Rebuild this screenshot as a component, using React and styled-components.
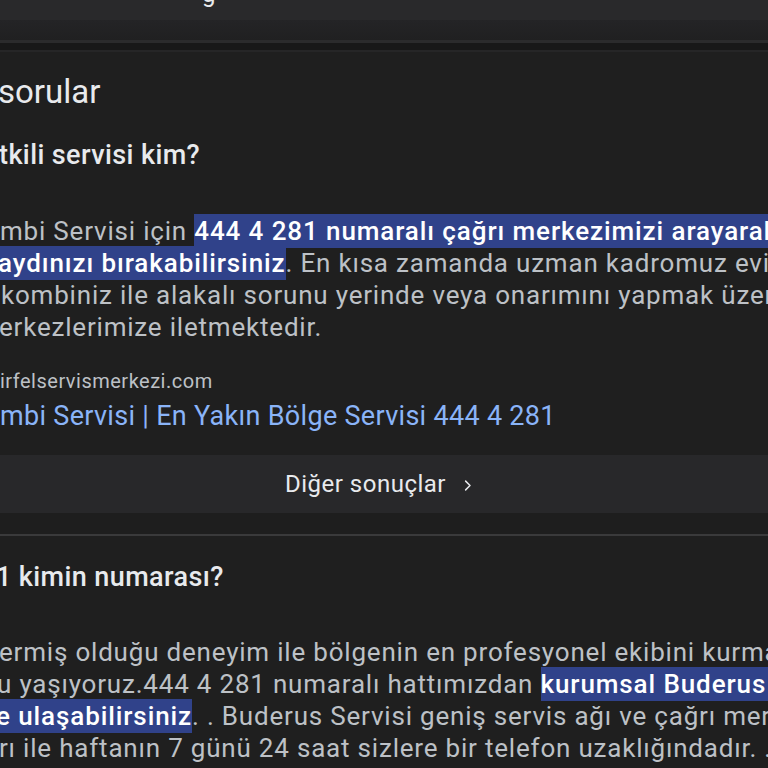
import React from "react";
import styled, { createGlobalStyle } from "styled-components";

const Global = createGlobalStyle`
  html, body { margin: 0; padding: 0; background: #1f1f1f; }
  body { width: 768px; height: 768px; overflow: hidden; font-family: Roboto, "Noto Sans", Arial, sans-serif; }
  #root { width: 768px; overflow: hidden; }
`;

const Page = styled.div`
  width: 768px;
  height: 768px;
  overflow: hidden;
  background: #1f1f1f;
  display: flex;
  flex-direction: column;
`;

const TopBar = styled.div`
  height: 20px;
  background: #29292b;
  overflow: hidden;
  display: flex;
  justify-content: flex-start;
  padding-left: 202px;
`;

const CutGlyph = styled.span`
  color: #e8eaed;
  font-size: 24px;
  line-height: 20px;
  margin-top: -16px;
`;

const SubBar = styled.div`
  height: 20px;
  background: linear-gradient(#242426, #202021);
`;

const Rule = styled.div`
  height: ${(p) => p.h}px;
  background: ${(p) => p.c};
`;

const Section = styled.section`
  display: flex;
  flex-direction: column;
  padding-top: ${(p) => p.pt}px;
`;

const Heading = styled.h2`
  margin: 0;
  font-family: Roboto, sans-serif;
  font-weight: 400;
  font-size: 33px;
  line-height: 40px;
  color: #e8eaed;
  white-space: nowrap;
  margin-left: ${(p) => p.indent || 0}px;
`;

const Question = styled.div`
  font-size: 27px;
  font-weight: 500;
  letter-spacing: 0.4px;
  line-height: 32px;
  color: #e8eaed;
  white-space: nowrap;
  margin-top: ${(p) => p.mt || 0}px;
  margin-left: ${(p) => p.indent || 0}px;
`;

const Para = styled.div`
  display: flex;
  flex-direction: column;
  margin-top: ${(p) => p.mt}px;
`;

const Line = styled.div`
  font-size: 26px;
  letter-spacing: 0.8px;
  line-height: 32px;
  color: #bdc1c6;
  white-space: nowrap;
  margin-left: ${(p) => p.indent || 0}px;
`;

const Mark = styled.span`
  background: #30428a;
  color: #ffffff;
  font-weight: 500;
  letter-spacing: 0.9px;
  padding: 2px 0;
`;

const Source = styled.div`
  margin-top: 26px;
  font-size: 20px;
  letter-spacing: 0.5px;
  line-height: 24px;
  color: #bdc1c6;
  white-space: nowrap;
`;

const TitleLink = styled.a`
  display: block;
  margin-top: 7px;
  font-size: 27px;
  letter-spacing: 0.3px;
  line-height: 32px;
  color: #8ab4f8;
  text-decoration: none;
  white-space: nowrap;
`;

const MoreButton = styled.div`
  margin-top: 23px;
  height: 58px;
  background: #28282a;
  display: flex;
  align-items: center;
  justify-content: center;
  gap: 14px;
  color: #e8eaed;
  font-size: 24px;
  letter-spacing: 0.5px;
  padding-right: 8px;
`;

const Chevron = styled.svg`
  width: 15px;
  height: 15px;
  margin-top: 2px;
`;

const Gap = styled.div`
  height: 21px;
  background: #1e1e1e;
`;

export default function App() {
  return (
    <Page>
      <Global />
      <TopBar>
        <CutGlyph>g</CutGlyph>
      </TopBar>
      <SubBar />
      <Rule h={3} c="#2b2b2c" />
      <Rule h={7} c="#181818" />
      <Rule h={2} c="#262627" />
      <Section pt={20}>
        <Heading indent={-2}>sorular</Heading>
        <Question mt={27} indent={-1}>tkili servisi kim?</Question>
        <Para mt={44}>
          <Line>
            mbi Servisi için <Mark>444 4 281 numaralı çağrı merkezimizi arayarak</Mark>
          </Line>
          <Line indent={-2}>
            <Mark>aydınızı bırakabilirsiniz</Mark>. En kısa zamanda uzman kadromuz evinize
          </Line>
          <Line indent={1}>kombiniz ile alakalı sorunu yerinde veya onarımını yapmak üzere</Line>
          <Line indent={-1}>erkezlerimize iletmektedir.</Line>
        </Para>
        <Source>irfelservismerkezi.com</Source>
        <TitleLink>mbi Servisi | En Yakın Bölge Servisi 444 4 281</TitleLink>
        <MoreButton>
          <span>Diğer sonuçlar</span>
          <Chevron viewBox="0 0 24 24" fill="none" stroke="#e8eaed" strokeWidth="2.4" strokeLinecap="round" strokeLinejoin="round">
            <path d="M9 5l7 7-7 7" />
          </Chevron>
        </MoreButton>
        <Gap />
      </Section>
      <Rule h={2} c="#3a3a3b" />
      <Section pt={25}>
        <Question indent={-4}>1 kimin numarası?</Question>
        <Para mt={43}>
          <Line indent={-1}>ermiş olduğu deneyim ile bölgenin en profesyonel ekibini kurmanın</Line>
          <Line indent={-3}>
            u yaşıyoruz.444 4 281 numaralı hattımızdan <Mark>kurumsal Buderus servise</Mark>
          </Line>
          <Line indent={-4}>
            <Mark>e ulaşabilirsiniz</Mark>. . Buderus Servisi geniş servis ağı ve çağrı merkezi
          </Line>
          <Line indent={-1}>rı ile haftanın 7 günü 24 saat sizlere bir telefon uzaklığındadır. .</Line>
        </Para>
      </Section>
    </Page>
  );
}
